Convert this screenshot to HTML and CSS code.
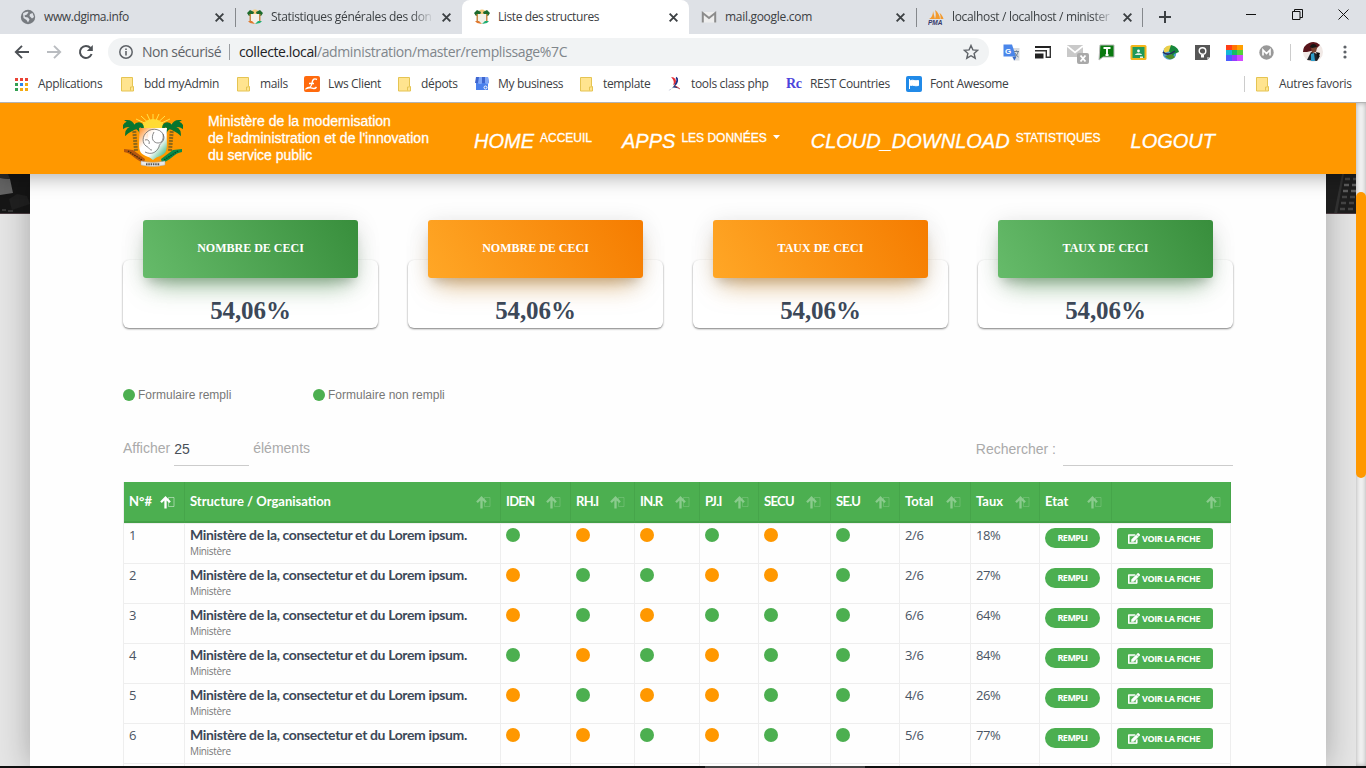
FILE: index.html
```html
<!DOCTYPE html>
<html lang="fr">
<head>
<meta charset="utf-8">
<title>Liste des structures</title>
<link rel="stylesheet" href="styles.css">
</head>
<body>
<svg class="defs" width="0" height="0">
  <defs>
    <linearGradient id="shieldFill" x1="0" y1="0" x2="1" y2="1"><stop offset="0" stop-color="#ff8a1e"/><stop offset=".35" stop-color="#fff"/><stop offset=".6" stop-color="#fff"/><stop offset="1" stop-color="#0ba15a"/></linearGradient>
    <symbol id="close" viewBox="0 0 10 10"><path d="M1.5 1.5l7 7M8.5 1.5l-7 7" stroke="#3c4043" stroke-width="1.7" fill="none"/></symbol>
    <symbol id="crest" viewBox="0 0 16 16"><circle cx="8" cy="4" r="3.4" fill="#f4c978"/><path d="M0 4l3-3 4 2-1 3-4 1zM16 4l-3-3-4 2 1 3 4 1z" fill="#1d6a2c"/><path d="M2.5 5h2v8h-2zM11.500 5h2v8h-2z" fill="#c98a45"/><path d="M4 5h8v7l-4 3-4-3z" fill="#f3f1e8"/><path d="M1 12l4 0 3 3-5-1z" fill="#e0792f"/><path d="M15 12l-4 0-3 3 5-1z" fill="#1fae73"/></symbol>
    <symbol id="folder" viewBox="0 0 13 15"><path d="M.5.5h11v9h1v4.500h-12z" fill="#ffe48f" stroke="#e5c452"/><path d="M9.500 13.500v-3.500h2" fill="none" stroke="#e5c452"/></symbol>
    <symbol id="sort" viewBox="0 0 15 13"><path d="M5.500 12.500V2M1 6.300l4.500-4.600L10 6.300" fill="none" stroke="#fff" stroke-width="2.300"/><path d="M8.500 1.500h5.500v9h-5.500z" fill="none" stroke="#fff" stroke-width="1" opacity=".45"/></symbol>
    <symbol id="edit" viewBox="0 0 576 512"><path fill="#fff" stroke="#fff" stroke-width="22" d="M402.600 83.200l90.200 90.200c3.800 3.800 3.800 10 0 13.800L274.400 405.600l-92.800 10.300c-12.400 1.400-22.900-9.100-21.500-21.500l10.300-92.800L388.800 83.200c3.800-3.800 10-3.800 13.800 0zm162-22.900l-48.800-48.800c-15.200-15.200-39.900-15.200-55.200 0l-35.400 35.400c-3.800 3.800-3.800 10 0 13.800l90.200 90.200c3.800 3.800 10 3.800 13.800 0l35.400-35.400c15.200-15.300 15.200-40 0-55.200zM384 346.200V448H64V128h229.800c3.200 0 6.200-1.300 8.500-3.500l40-40c7.600-7.600 2.200-20.500-8.500-20.500H48C21.500 64 0 85.500 0 112v352c0 26.500 21.500 48 48 48h352c26.500 0 48-21.500 48-48V306.200c0-10.700-12.900-16-20.500-8.500l-40 40c-2.200 2.300-3.500 5.300-3.500 8.500z"/></symbol>
  </defs>
</svg>
<div class="screen">
  <header class="chrome">
    <div class="tabs">
      <div class="tab">
        <svg class="tab-icon" viewBox="0 0 16 16"><circle cx="8" cy="8" r="7.200" fill="#777b80"/><path d="M3 4.500c2-1.500 4-2.300 5.500-1.500L7 5.500 4.500 6.500 5 8l3 .5 1.500 2L8 13.500 6.500 11l-3-2z" fill="#dee1e6"/><path d="M10 5l2.500-1 1.500 4-2 1.500L9.500 7z" fill="#dee1e6"/></svg>
        <span class="tab-title">www.dgima.info</span><svg class="tab-close"><use href="#close"/></svg>
      </div>
      <div class="tab divided">
        <svg class="tab-icon"><use href="#crest"/></svg>
        <span class="tab-title fade">Statistiques générales des don</span><svg class="tab-close"><use href="#close"/></svg>
      </div>
      <div class="tab active">
        <svg class="tab-icon"><use href="#crest"/></svg>
        <span class="tab-title">Liste des structures</span><svg class="tab-close"><use href="#close"/></svg>
      </div>
      <div class="tab">
        <svg class="tab-icon" viewBox="0 0 16 16"><path d="M1 3h14v10.500H1z" fill="#eee"/><path d="M1.800 13.500V4L8 9l6.200-5v9.500" fill="none" stroke="#8c8c8c" stroke-width="2"/></svg>
        <span class="tab-title mail">mail.google.com</span><svg class="tab-close"><use href="#close"/></svg>
      </div>
      <div class="tab divided last">
        <svg class="tab-icon" viewBox="0 0 16 16"><path d="M1 10c3-1 4-5 4-8l2 8zM7 10c1-3 1-6 0-9 3 2 5 6 5 9zM12.500 10c0-3 0-4-1-6 2 1 3.500 4 4 6z" fill="#f39a2d"/><text x="0" y="16" class="pma">PMA</text></svg>
        <span class="tab-title fade">localhost / localhost / minister</span><svg class="tab-close"><use href="#close"/></svg>
      </div>
      <svg class="new-tab" viewBox="0 0 12 12"><path d="M6 0v12M0 6h12" stroke="#3c4043" stroke-width="2"/></svg>
      <div class="window-buttons">
        <svg viewBox="0 0 11 11"><path d="M0 5.500h10" stroke="#111"/></svg>
        <svg viewBox="0 0 11 11"><path d="M.5 2.500h7.500v8H.5zM2.500 2.500v-2h8v8H8" fill="none" stroke="#111"/></svg>
        <svg viewBox="0 0 11 11"><path d="M.5.5l10 10M10.500.5l-10 10" stroke="#111"/></svg>
      </div>
    </div>
    <div class="toolbar">
      <svg class="nav-icon" viewBox="0 0 16 16"><path d="M15 8H2M8 1.800L1.800 8 8 14.200" fill="none" stroke="#4d5156" stroke-width="1.900"/></svg>
      <svg class="nav-icon" viewBox="0 0 16 16"><path d="M1 8h13M8 1.800L14.200 8 8 14.200" fill="none" stroke="#b9bcc0" stroke-width="1.900"/></svg>
      <svg class="nav-icon" viewBox="0 0 16 16"><path d="M13.600 10A6 6 0 1 1 12.500 4" fill="none" stroke="#4d5156" stroke-width="2"/><path d="M14.800 1v6h-6z" fill="#4d5156"/></svg>
      <div class="omnibox">
        <svg class="info" viewBox="0 0 14 14"><circle cx="7" cy="7" r="6.200" fill="none" stroke="#5f6368" stroke-width="1.500"/><path d="M7 6v4.500M7 3.400V5" stroke="#5f6368" stroke-width="1.600"/></svg>
        <span class="insecure">Non sécurisé</span>
        <span class="url"><b>collecte.local</b>/administration/master/remplissage%7C</span>
        <svg class="star" viewBox="0 0 16 16"><path d="M8 1.500l1.900 4.400 4.800.4-3.600 3.200 1.100 4.700L8 11.700l-4.200 2.500 1.100-4.700L1.300 6.300l4.800-.4z" fill="none" stroke="#5f6368" stroke-width="1.400"/></svg>
      </div>
      <div class="extensions">
        <svg viewBox="0 0 17 17"><path d="M7 4h9.500v12.500h-6z" fill="#d9dcdf"/><path d="M.5.500h8.500l4 12H.5z" fill="#4a86ea"/><path d="M9.500 13l2 3.500 2-4z" fill="#3367c9"/><text x="2" y="9.500" class="gt">G</text><path d="M11 7.500h5M13.500 6.500v1M15 8c-.5 2.500-2 4-3.500 5M12 9c.7 1.800 2 3 3.500 4" stroke="#6b7f95" fill="none"/></svg>
        <svg viewBox="0 0 17 17"><path d="M0 2h16v2H0z" fill="#222"/><path d="M15.300 3v10.300H11.500" fill="none" stroke="#333" stroke-width="1.400"/><path d="M0 6.700h11.300V14" fill="none" stroke="#333" stroke-width="1.400"/><path d="M0 9.500h8.500V14.500H0z" fill="#222"/></svg>
        <svg class="mail-checker" viewBox="0 0 22 22"><path d="M0 3h16v12H0z" fill="#c9c9c9"/><path d="M0 4l8 6.500L16 4" fill="none" stroke="#fff" stroke-width="1.700"/><rect x="10" y="11" width="12" height="11" rx="2" fill="#a9a9a9"/><path d="M13.500 13.500l5 6M18.500 13.500l-5 6" stroke="#fff" stroke-width="1.900"/></svg>
        <svg viewBox="0 0 17 17"><path d="M2 1h14v12H5l-4 3z" fill="#0a7a10" stroke="#bbb"/><path d="M5.500 4h7M9 4v7M7.500 11h3" stroke="#fff" stroke-width="1.900"/></svg>
        <svg viewBox="0 0 17 17"><rect x=".5" y="1" width="16" height="15" rx="1.500" fill="#f2b51b"/><path d="M2.500 3h12v11h-12z" fill="#20995a"/><circle cx="8.500" cy="7" r="1.400" fill="#fff"/><path d="M5 11c0-2.500 7-2.500 7 0zM10 12.500h3v1.500h-3z" fill="#e3f2e8"/></svg>
        <svg viewBox="0 0 17 17"><circle cx="7.500" cy="9" r="6.800" fill="#4f9fd0"/><path d="M2 5c2-4 6-4 9-3L8 7l-6 2z" fill="#ecd04a"/><path d="M9 1c4 1 7 3 8 7l-5 2-1 3-4-6z" fill="#16883c"/><path d="M3 12c3 4 7 4 10 1l-4-3z" fill="#4c8f2b"/><path d="M1 8c3 3 7 3 12-1" stroke="#252d60" fill="none" stroke-width="1.600"/></svg>
        <svg viewBox="0 0 17 17"><path d="M1 1h15v12l-3 3H1z" fill="#565656"/><path d="M13 16v-3h3z" fill="#aaa"/><circle cx="8.500" cy="7" r="3.300" fill="none" stroke="#fff" stroke-width="1.400"/><path d="M7 11h3v2.500H7z" fill="#fff"/></svg>
        <svg viewBox="0 0 17 17"><path d="M0 1h6v5H0z" fill="#ff3d17"/><path d="M6 1h5v5H6z" fill="#ff7300"/><path d="M11 1h6v5h-6z" fill="#ffa000"/><path d="M0 6h6v5H0z" fill="#13b7d5"/><path d="M6 6h5v5H6z" fill="#13bd65"/><path d="M11 6h6v5h-6z" fill="#54d238"/><path d="M0 11h6v6H0z" fill="#4d5dff"/><path d="M6 11h5v6H6z" fill="#963bff"/><path d="M11 11h6v6h-6z" fill="#d24bff"/></svg>
        <svg viewBox="0 0 17 17"><circle cx="8.500" cy="8.500" r="7.200" fill="#999"/><path d="M5 11.500V6l3.500 3.500L12 6v5.500" fill="none" stroke="#fff" stroke-width="1.600"/></svg>
      </div>
      <svg class="avatar" viewBox="0 0 20 20"><circle cx="10" cy="10" r="10" fill="#f1e9e6"/><path d="M0 10A10 10 0 0 1 17 3L12 8 4 10z" fill="#59151b"/><path d="M8 5c2-3 6-2 6 1l-1 4-4 1z" fill="#7a4432"/><path d="M7 5c1-4 6-4 7 0l-5 1z" fill="#151515"/><path d="M4 18l4-8 4 1 5 3-3 5z" fill="#20252c"/><path d="M8 12l3-1 1 8H8z" fill="#2f9dc9"/><path d="M13 10l4 1-2 6z" fill="#111"/></svg>
      <svg class="menu" viewBox="0 0 4 14"><circle cx="2" cy="2" r="1.600" fill="#5f6368"/><circle cx="2" cy="7" r="1.600" fill="#5f6368"/><circle cx="2" cy="12" r="1.600" fill="#5f6368"/></svg>
    </div>
    <div class="bookmarks">
      <div class="bm w1"><svg viewBox="0 0 13 13"><path d="M0 0h3v3H0zM5 0h3v3H5zM10 0h3v3h-3z" fill="#ea4335"/><path d="M0 5h3v3H0z" fill="#34a053"/><path d="M5 5h3v3H5z" fill="#2b84ed"/><path d="M10 5h3v3h-3zM5 10h3v3H5zM10 10h3v3h-3z" fill="#f4ab12"/><path d="M0 10h3v3H0z" fill="#34a053"/></svg>Applications</div>
      <div class="bm w2"><svg><use href="#folder"/></svg>bdd myAdmin</div>
      <div class="bm w3"><svg><use href="#folder"/></svg>mails</div>
      <div class="bm w4 wide"><svg viewBox="0 0 16 16"><rect width="16" height="16" rx="2" fill="#ff6a0d"/><path d="M13 3.500c-3-1.500-4.500 0-5 3.500s-1.500 5-5.500 5.500c2-2 3.500-1 5.500-.3s3.500.3 4.500-1.200M5 7.500h5" fill="none" stroke="#fff" stroke-width="1.400"/></svg>Lws Client</div>
      <div class="bm w5"><svg><use href="#folder"/></svg>dépots</div>
      <div class="bm w6 wide"><svg viewBox="0 0 16 16"><path d="M2 6h12v8H2z" fill="#4a80ec"/><path d="M2 1h12l1 6H1z" fill="#3e65cf"/><path d="M5 1h3v6.500c-2 1-3.500.5-4-.5zM11 1h3l1 6c-1 1.500-3 1.500-4 0z" fill="#7fa6f7"/><circle cx="11.500" cy="11.500" r="1.500" fill="none" stroke="#fff"/></svg>My business</div>
      <div class="bm w7"><svg><use href="#folder"/></svg>template</div>
      <div class="bm w8 wide"><svg viewBox="0 0 16 16"><path d="M4 1c4 0 6 3 4.500 7l-2.500 1C8 6 6 3 4 1z" fill="#e62b32"/><path d="M9 1.500c2 1 1.500 5-1 7.500" fill="none" stroke="#1d2d86" stroke-width="1.800"/><path d="M1.500 14.500c4-1 5-5 6-5.500l5 3.500-6-1z" fill="#263b78"/><path d="M8 9.500l5 3.500" stroke="#d64b51"/></svg>tools class php</div>
      <div class="bm w9 wide"><span class="rc">Rc</span>REST Countries</div>
      <div class="bm w10 wide"><svg viewBox="0 0 16 16"><rect width="16" height="16" rx="2" fill="#218ae8"/><path d="M3.500 3v10M4.500 4.500c3-1 4 1 8 0v5c-4 1-5-1-8 0z" fill="#fff" stroke="#fff"/></svg>Font Awesome</div>
      <div class="bm others"><svg><use href="#folder"/></svg>Autres favoris</div>
    </div>
  </header>

  <div class="viewport">
    <div class="page">
      <nav class="navbar">
        <svg class="logo" viewBox="0 0 60 54">
          <g stroke="#ffe34d" stroke-width="1"><path d="M30 14V1M30 14L24 1M30 14L18 3M30 14L13 6M30 14l6-13M30 14L42 3M30 14l17-8M30 14L10 11M30 14l20-3"/></g>
          <path d="M18 16a12 10 0 0 1 24 0z" fill="#ffdb35"/>
          <g stroke="#8d6718" stroke-width="4" stroke-dasharray="2 1"><path d="M11 15l2 23M49 15l-2 23"/></g>
          <path d="M11 14C6 6 1 10 0 15c4-3 7-2 11-1-5 0-8 3-8 7 3-3 6-3 9-6 4 1 5 4 6 6 1-4-2-7-5-7 3-2 5-1 7 1 0-5-5-7-9-2-1-3-4-5-7-5 3 2 5 3 7 6zM49 14c5-8 10-4 11 1-4-3-7-2-11-1 5 0 8 3 8 7-3-3-6-3-9-6-4 1-5 4-6 6-1-4 2-7 5-7-3-2-5-1-7 1 0-5 5-7 9-2 1-3 4-5 7-5-3 2-5 3-7 6z" fill="#08752f" stroke="#08752f" stroke-width="1.800"/>
          <path d="M16 15h28c-1 7 1 18-1 23-2 5-9 5-13 9-4-4-11-4-13-9-2-5 0-16-1-23z" fill="url(#shieldFill)"/>
          <path d="M24 19c5-5 16-3 17 5 0 6-5 6-5 10-3 6-8 8-14 5M24 19c-5 4-5 11-1 14 4 2 3 4 6 4M31 19c-4 7 0 11 4 11s6-4 5-9M22 27c3-1 5 1 4 4" fill="#fff" fill-opacity=".6" stroke="#555" stroke-width=".7"/>
          <path d="M1 36l9 1 12 9-1 4C13 48 9 40 1 39z" fill="#b5560e"/>
          <path d="M59 36l-9 1-12 9 1 4c8-2 12-10 20-11z" fill="#0b8b4a"/>
          <path d="M5 38l14 9" stroke="#3e2b0e" stroke-width="1.300" stroke-dasharray="1.500 1"/><path d="M55 38l-14 9" stroke="#064d2a" stroke-width="1.300" stroke-dasharray="1.500 1"/>
          <path d="M18 48q12 3 24 0v4q-12 3-24 0z" fill="#e9e9e9" stroke="#aaa" stroke-width=".5"/><path d="M23 51.200h14" stroke="#555" stroke-width="2" stroke-dasharray="1.500 .8"/>
        </svg>
        <div class="brand">Ministère de la modernisation<br>de l'administration et de l'innovation<br>du service public</div>
        <div class="links">
          <a class="link"><i>HOME</i><span>ACCEUIL</span></a>
          <a class="link apps"><i>APPS</i><span>LES DONNÉES</span><svg class="caret" viewBox="0 0 7 4"><path d="M0 0h7L3.500 4z" fill="#fff"/></svg></a>
          <a class="link"><i>CLOUD_DOWNLOAD</i><span>STATISTIQUES</span></a>
          <a class="link"><i>LOGOUT</i></a>
        </div>
      </nav>

      <div class="backdrop">
        <svg class="photo" viewBox="0 0 30 40" preserveAspectRatio="none"><path d="M0 0h30v40H0z" fill="#161616"/><path d="M0 4l10 1 3 14-13 2z" fill="#656565"/><path d="M0 0h8l2 5-10-1z" fill="#2b2b2b"/><path d="M9 25l8-5 10 2 3 8-9 3-9 3z" fill="#202020"/><path d="M2 36h4M8 37h5" stroke="#555"/><path d="M0 39.500h30" stroke="#4a3b40"/></svg>
        <main class="content">
          <section class="stats">
            <article class="card"><h2 class="card-head green">NOMBRE DE CECI</h2><p class="figure">54,06%</p></article>
            <article class="card"><h2 class="card-head orange">NOMBRE DE CECI</h2><p class="figure">54,06%</p></article>
            <article class="card"><h2 class="card-head orange">TAUX DE CECI</h2><p class="figure">54,06%</p></article>
            <article class="card"><h2 class="card-head green">TAUX DE CECI</h2><p class="figure">54,06%</p></article>
          </section>

          <div class="legend">
            <span class="legend-item"><span class="bullet"></span>Formulaire rempli</span>
            <span class="legend-item"><span class="bullet"></span>Formulaire non rempli</span>
          </div>

          <div class="filters">
            <span>Afficher</span><span class="length">25</span><span class="unit">éléments</span>
            <span class="search-label">Rechercher :</span><input class="search" type="text" aria-label="Rechercher">
          </div>

          <div class="table">
            <div class="row head">
              <div>N°#<svg class="sort on"><use href="#sort"/></svg></div>
              <div>Structure / Organisation<svg class="sort"><use href="#sort"/></svg></div>
              <div class="tight">IDEN<svg class="sort"><use href="#sort"/></svg></div>
              <div class="tight">RH.I<svg class="sort"><use href="#sort"/></svg></div>
              <div class="tight">IN.R<svg class="sort"><use href="#sort"/></svg></div>
              <div class="tight">PJ.I<svg class="sort"><use href="#sort"/></svg></div>
              <div class="tight">SECU<svg class="sort"><use href="#sort"/></svg></div>
              <div class="tight">SE.U<svg class="sort"><use href="#sort"/></svg></div>
              <div>Total<svg class="sort"><use href="#sort"/></svg></div>
              <div>Taux<svg class="sort"><use href="#sort"/></svg></div>
              <div>Etat<svg class="sort"><use href="#sort"/></svg></div>
              <div><svg class="sort"><use href="#sort"/></svg></div>
            </div>
            <div class="row"><div>1</div><div><strong>Ministère de la, consectetur et du Lorem ipsum.</strong><small>Ministère</small></div><div><i class="dot"></i></div><div><i class="dot no"></i></div><div><i class="dot no"></i></div><div><i class="dot"></i></div><div><i class="dot no"></i></div><div><i class="dot"></i></div><div>2/6</div><div>18%</div><div><span class="badge">REMPLI</span></div><div><a class="btn"><svg><use href="#edit"/></svg>VOIR LA FICHE</a></div></div>
            <div class="row"><div>2</div><div><strong>Ministère de la, consectetur et du Lorem ipsum.</strong><small>Ministère</small></div><div><i class="dot no"></i></div><div><i class="dot"></i></div><div><i class="dot"></i></div><div><i class="dot no"></i></div><div><i class="dot no"></i></div><div><i class="dot"></i></div><div>2/6</div><div>27%</div><div><span class="badge">REMPLI</span></div><div><a class="btn"><svg><use href="#edit"/></svg>VOIR LA FICHE</a></div></div>
            <div class="row"><div>3</div><div><strong>Ministère de la, consectetur et du Lorem ipsum.</strong><small>Ministère</small></div><div><i class="dot no"></i></div><div><i class="dot"></i></div><div><i class="dot no"></i></div><div><i class="dot"></i></div><div><i class="dot"></i></div><div><i class="dot"></i></div><div>6/6</div><div>64%</div><div><span class="badge">REMPLI</span></div><div><a class="btn"><svg><use href="#edit"/></svg>VOIR LA FICHE</a></div></div>
            <div class="row"><div>4</div><div><strong>Ministère de la, consectetur et du Lorem ipsum.</strong><small>Ministère</small></div><div><i class="dot"></i></div><div><i class="dot no"></i></div><div><i class="dot"></i></div><div><i class="dot no"></i></div><div><i class="dot"></i></div><div><i class="dot"></i></div><div>3/6</div><div>84%</div><div><span class="badge">REMPLI</span></div><div><a class="btn"><svg><use href="#edit"/></svg>VOIR LA FICHE</a></div></div>
            <div class="row"><div>5</div><div><strong>Ministère de la, consectetur et du Lorem ipsum.</strong><small>Ministère</small></div><div><i class="dot no"></i></div><div><i class="dot"></i></div><div><i class="dot no"></i></div><div><i class="dot no"></i></div><div><i class="dot"></i></div><div><i class="dot"></i></div><div>4/6</div><div>26%</div><div><span class="badge">REMPLI</span></div><div><a class="btn"><svg><use href="#edit"/></svg>VOIR LA FICHE</a></div></div>
            <div class="row"><div>6</div><div><strong>Ministère de la, consectetur et du Lorem ipsum.</strong><small>Ministère</small></div><div><i class="dot no"></i></div><div><i class="dot no"></i></div><div><i class="dot"></i></div><div><i class="dot no"></i></div><div><i class="dot"></i></div><div><i class="dot"></i></div><div>5/6</div><div>77%</div><div><span class="badge">REMPLI</span></div><div><a class="btn"><svg><use href="#edit"/></svg>VOIR LA FICHE</a></div></div>
            <div class="row blank"><div></div><div></div><div></div><div></div><div></div><div></div><div></div><div></div><div></div><div></div><div></div><div></div></div>
          </div>
        </main>
        <svg class="photo" viewBox="0 0 30 40" preserveAspectRatio="none"><path d="M0 0h30v40H0z" fill="#1d1d1d"/><path d="M8 40L16 0h2L11 40z" fill="#303030"/><g stroke="#5c5c5c" stroke-width="2.500" stroke-dasharray="5 3"><path d="M18 11h12M17 17h13"/></g><g stroke="#434343" stroke-width="2.500" stroke-dasharray="5 3"><path d="M19 5h11M16 23h14M15 29h15M14 35h16"/></g><path d="M0 39.500h30" stroke="#4a3b40"/></svg>
      </div>
    </div>
    <div class="scrollbar"><div class="thumb"></div></div>
  </div>
  <div class="taskbar"><div class="taskbar-active"></div></div>
</div>
</body>
</html>
```
FILE: styles.css
```css
* { box-sizing: border-box; }
body { margin: 0; overflow: hidden; font-family: "Liberation Sans", Arial, sans-serif; }
svg { display: block; flex: none; }
.defs { position: absolute; }
.screen { display: flex; flex-direction: column; width: 1366px; height: 768px; overflow: hidden; }

/* Browser window */
.chrome { flex: none; height: 103px; background: #fff; border-bottom: 1px solid #b3b3b3; font: 12px/16px "Open Sans", sans-serif; color: #3c4043; }
.tabs { display: flex; height: 34px; padding-left: 8px; background: #dee1e6; }
.tab { display: flex; align-items: center; width: 227px; height: 34px; padding-left: 12px; }
.tab.active { background: #fff; border-radius: 8px 8px 0 0; }
.tab.divided { background: linear-gradient(#85888c, #85888c) 0 8px / 1px 19px no-repeat; }
.tab.last { background: linear-gradient(#85888c, #85888c) 0 8px / 1px 19px no-repeat, linear-gradient(#85888c, #85888c) 100% 8px / 1px 19px no-repeat; }
.tab-icon { width: 16px; height: 16px; margin-right: 8px; }
.tab-title { width: 163px; margin-right: 7px; white-space: nowrap; letter-spacing: -.4px; }
.tab-title.mail { letter-spacing: -.3px; }
.tab-title.fade { letter-spacing: -.33px; -webkit-mask-image: linear-gradient(90deg, #000 86%, transparent); mask-image: linear-gradient(90deg, #000 86%, transparent); }
.tab-close { width: 11px; height: 11px; }
.pma { font: italic bold 6.500px "Liberation Sans", sans-serif; fill: #34386b; }
.gt { font: bold 8px "Liberation Sans", sans-serif; fill: #fff; }
.new-tab { width: 12px; height: 12px; margin: 11px 0 0 16px; }
.window-buttons { display: flex; gap: 35px; margin: 9px 17px 0 auto; }
.window-buttons svg { width: 11px; height: 11px; }

.toolbar { display: flex; align-items: center; height: 36px; padding-left: 14px; }
.nav-icon { width: 16px; height: 16px; margin-right: 16px; }
.omnibox { display: flex; align-items: center; width: 881px; height: 28px; margin-left: -2px; padding: 0 10px 0 11px; border-radius: 14px; background: #f1f3f4; font-size: 14px; }
.info { width: 14px; height: 14px; margin-right: 9px; }
.insecure { width: 88px; height: 16px; margin-right: 9px; border-right: 1px solid #9a9da1; letter-spacing: -.48px; line-height: 15px; color: #5f6368; white-space: nowrap; }
.url { letter-spacing: -.38px; color: #80868b; }
.url b { font-weight: 400; color: #202124; }
.star { width: 16px; height: 16px; margin-left: auto; }
.extensions { display: flex; gap: 15px; width: 288px; height: 17px; margin-left: 14px; border-right: 1px solid #ccc; }
.extensions svg { width: 17px; height: 17px; }
.extensions .mail-checker { width: 22px; height: 22px; margin: -2px -6px 0 0; }
.avatar { width: 20px; height: 20px; margin-left: 12px; }
.menu { width: 4px; height: 14px; margin-left: 20px; }

.bookmarks { display: flex; align-items: center; height: 28px; padding-left: 15px; letter-spacing: -.34px; }
.bm { display: flex; align-items: center; white-space: nowrap; }
.bm svg { width: 13px; height: 15px; margin-right: 10px; }
.bm.wide svg { width: 16px; height: 16px; margin-right: 8px; }
.w1 { width: 106px; }
.w2 { width: 116px; }
.w3 { width: 67px; }
.w4 { width: 94px; }
.w5 { width: 76px; }
.w6 { width: 106px; }
.w7 { width: 87px; }
.w8 { width: 119px; }
.w9 { width: 120px; }
.rc { width: 24px; font-family: "Liberation Serif", serif; font-weight: bold; font-size: 14px; color: #4c45dc; }
.others { margin-left: auto; width: 122px; height: 16px; padding-left: 11px; border-left: 1px solid #ccc; }

/* Application */
.viewport { display: flex; flex: 1; min-height: 0; background: #e5e5e5; }
.page { display: flex; flex-direction: column; width: 1356px; overflow: hidden; }
.navbar { position: relative; z-index: 1; display: flex; align-items: flex-start; flex: none; height: 71px; padding-left: 123px; background: #ff9800; color: #fff; box-shadow: 0 4px 18px rgba(0, 0, 0, .3); }
.logo { width: 60px; height: 54px; margin-top: 10px; }
.brand { width: 266px; margin: 10px 0 0 25px; font-size: 14px; line-height: 17px; -webkit-text-stroke: .3px #fff; }
.links { display: flex; gap: 30px; margin-top: 29px; -webkit-text-stroke: .3px #fff; }
.link { display: flex; gap: 6px; font-size: 12px; line-height: 12px; }
.link i { font-size: 20px; line-height: 19px; }
.link.apps { margin-right: 1px; }
.caret { width: 7px; height: 4px; margin-top: 3px; }

.backdrop { display: flex; flex: 1; min-height: 0; }
.photo { width: 30px; height: 40px; }
.content { width: 1296px; padding: 46px 93px 0; background: #fefefe; box-shadow: 0 0 30px rgba(0, 0, 0, .28); }
.stats { display: flex; gap: 30px; }
.card { width: 255px; height: 68px; margin-top: 40px; padding: 0 20px; border-radius: 6px; background: #fff; box-shadow: 0 1px 2px rgba(0, 0, 0, .5); }
.card-head { height: 58px; margin: -40px 0 0; border-radius: 3px; color: #fff; font: bold 12px/57px "Liberation Serif", serif; text-align: center; }
.green { background: linear-gradient(60deg, #66bb6a, #388e3c); box-shadow: 0 16px 26px -10px rgba(56, 142, 60, .5), 0 4px 25px rgba(0, 0, 0, .12), 0 8px 10px -5px rgba(0, 0, 0, .2); }
.orange { background: linear-gradient(60deg, #ffa726, #f57c00); box-shadow: 0 16px 26px -10px rgba(220, 135, 20, .5), 0 4px 25px rgba(0, 0, 0, .12), 0 8px 10px -5px rgba(0, 0, 0, .2); }
.figure { margin: 18px 0 0; font: bold 25px/30px "Liberation Serif", serif; letter-spacing: -.1px; text-align: center; color: #3c4858; }

.legend { display: flex; margin-top: 60px; font-size: 12px; line-height: 14px; color: #777; }
.legend-item { display: flex; align-items: center; width: 190px; }
.bullet { width: 12px; height: 12px; margin-right: 3px; border-radius: 50%; background: #4caf50; }
.filters { display: flex; height: 26px; margin-top: 38px; font-size: 14px; line-height: 17px; color: #aaa; }
.length { width: 75px; margin-left: 4px; padding-top: 1px; border-bottom: 1px solid #ccc; color: #495057; }
.unit { margin-left: 4px; }
.search-label { margin: 1px 7px 0 auto; }
.search { width: 170px; padding: 0; border: 0; border-bottom: 1px solid #ccc; background: none; }

.table { width: 1108px; margin-top: 16px; font-size: 13px; line-height: 15px; color: #4a5564; }
.row { display: grid; grid-template-columns: 61px 316px 70px 64px 65px 59px 72px 69px 71px 69px 72px 119px; height: 40px; border-left: 1px solid #eee; font-family: "Open Sans", sans-serif; letter-spacing: -.4px; }
.row > div { padding: 4px 0 0 5px; border-right: 1px solid #eee; border-bottom: 1px solid #eee; }
.row.head { height: 42px; font: bold 13px/18px Lato, sans-serif; letter-spacing: 0; color: #fff; }
.row.head > div { display: flex; align-items: flex-start; justify-content: space-between; height: 41px; padding: 10px 9px 0 5px; background: #4caf50; border-right-color: #46a54a; border-bottom: 2px solid #43a047; box-shadow: 0 1px #eee; }
.row.head > .tight { letter-spacing: -.7px; }
.sort { width: 15px; height: 13px; margin: 4px 0 0 auto; opacity: .35; }
.sort.on { opacity: 1; }
.row strong { display: block; margin-top: -1px; margin-bottom: 1px; font: bold 14px/16px Lato, sans-serif; letter-spacing: -.37px; white-space: nowrap; color: #3c4858; }
.row small { display: block; font: 10px/14px "Open Sans", sans-serif; letter-spacing: -.35px; color: #777; }
.dot { display: block; width: 14px; height: 14px; border-radius: 50%; background: #4caf50; }
.dot.no { background: #ff9800; }
.badge { display: block; width: 55px; height: 20px; border-radius: 10px; background: #4caf50; color: #fff; font: bold 9px/20px "Open Sans", sans-serif; letter-spacing: -.5px; text-align: center; }
.btn { display: flex; align-items: center; width: 96px; height: 21px; padding-left: 11px; border-radius: 3px; background: #4caf50; color: #fff; font: bold 9px/21px "Open Sans", sans-serif; letter-spacing: -.42px; }
.btn svg { width: 12px; height: 11px; margin-right: 2px; }
.row.blank > div { border-bottom: 0; }

.scrollbar { width: 10px; padding-top: 89px; background: #f2f2f2; box-shadow: inset 0 0 5px rgba(0, 0, 0, .3); }
.thumb { height: 286px; border-radius: 5px; background: #ff9800; }
.taskbar { flex: none; height: 2px; padding-left: 705px; background: #101010; }
.taskbar-active { width: 160px; height: 2px; background: #444; }
```
